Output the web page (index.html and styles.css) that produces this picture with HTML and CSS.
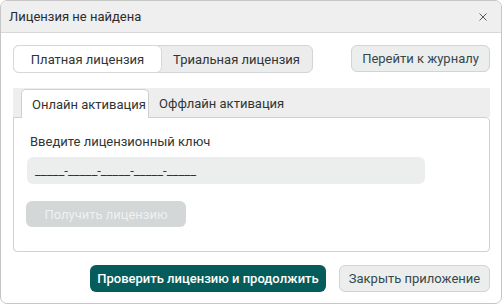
FILE: index.html
```html
<!DOCTYPE html>
<html lang="ru">
<head>
<meta charset="utf-8">
<link rel="stylesheet" href="styles.css">
</head>
<body>
<div class="window">
  <div class="titlebar">
    <span class="title">Лицензия не найдена</span>
    <svg class="close" width="10" height="10" viewBox="0 0 10 10"><path d="M1.5 1.5L8.5 8.5M8.5 1.5L1.5 8.5" stroke="#5a5a5a" stroke-width="1" fill="none"/></svg>
  </div>
  <div class="content">
    <div class="toprow">
      <div class="segmented">
        <div class="seg active">Платная лицензия</div>
        <div class="seg">Триальная лицензия</div>
      </div>
      <button class="btn secondary journal">Перейти к журналу</button>
    </div>
    <div class="tabs">
      <div class="tab active">Онлайн активация</div>
      <div class="tab">Оффлайн активация</div>
    </div>
    <div class="panel">
      <div class="label">Введите лицензионный ключ</div>
      <div class="input">_____-_____-_____-_____-_____</div>
      <button class="btn disabled">Получить лицензию</button>
    </div>
    <div class="footer">
      <button class="btn primary">Проверить лицензию и продолжить</button>
      <button class="btn secondary closeapp">Закрыть приложение</button>
    </div>
  </div>
</div>
</body>
</html>
```
FILE: styles.css
```css
* { box-sizing: border-box; }
html, body { margin: 0; padding: 0; background: #ffffff; }
body { font-family: Roboto, "Noto Sans", sans-serif; font-size: 13px; color: #2f3535; }
.window {
  width: 502px; height: 304px;
  border: 1px solid #c6c6c6; border-radius: 7px;
  overflow: hidden; background: #fff;
  display: flex; flex-direction: column;
}
.titlebar {
  height: 32px; flex: none;
  background: #efefef; border-bottom: 1px solid #d8d8d8;
  display: flex; align-items: center; justify-content: space-between;
  padding: 0 13px 0 8px;
}
.title { color: #2b2b2b; }
.close { display: block; }
.content { padding: 12px 11px 0 12px; display: flex; flex-direction: column; }
.toprow { display: flex; justify-content: space-between; align-items: flex-start; }
.segmented {
  display: grid; grid-template-columns: 148px 149px;
  height: 28px; width: 300px;
  background: #ececec; border: 1px solid #d3d6d6; border-radius: 6px;
}
.seg { display: flex; align-items: center; justify-content: center; color: #2f3535; }
.seg.active { background: #fff; border: 1px solid #d6d9d9; border-radius: 6px; margin: -1px 0 -1px -1px; }
.btn {
  font-family: inherit; font-size: 13px; border-radius: 6px; height: 27px;
  padding: 0; cursor: default;
}
.secondary { background: #eceeee; border: 1px solid #cfd4d4; color: #35484a; }
.journal { width: 139px; }
.tabs {
  margin-top: 15px; height: 29px; background: #eeeeee;
  display: flex; align-items: flex-end; padding-left: 8px;
  position: relative; z-index: 1;
}
.tab { height: 28px; padding: 0 9px 0 10px; display: flex; align-items: center; color: #2f3535; white-space: nowrap; }
.tab.active {
  background: #fff; border: 1px solid #cdd1d1; border-bottom: none;
  border-radius: 5px 5px 0 0; height: 29px; margin-bottom: -1px; width: 128px; padding-top: 1px;
}
.panel {
  height: 135px; border: 1px solid #cdd1d1; border-radius: 0 4px 4px 4px;
  padding: 16px 0 0 13px;
}
.label { padding-left: 3px; line-height: 16px; }
.input {
  margin-top: 7px; width: 398px; height: 27px; background: #eceeee; border-radius: 6px;
  display: flex; align-items: center; padding-left: 8px; color: #2f3535;
}
.disabled { margin-top: 17px; width: 160px; height: 26px; background: #d3d7d7; border: none; color: #eef1f1; margin-left: -1px; display: block; }
.footer { display: flex; justify-content: flex-end; gap: 13px; margin-top: 13px; }
.primary { width: 236px; background: #065c5a; border: none; color: #fff; font-weight: 500; }
.closeapp { width: 151px; }
```
